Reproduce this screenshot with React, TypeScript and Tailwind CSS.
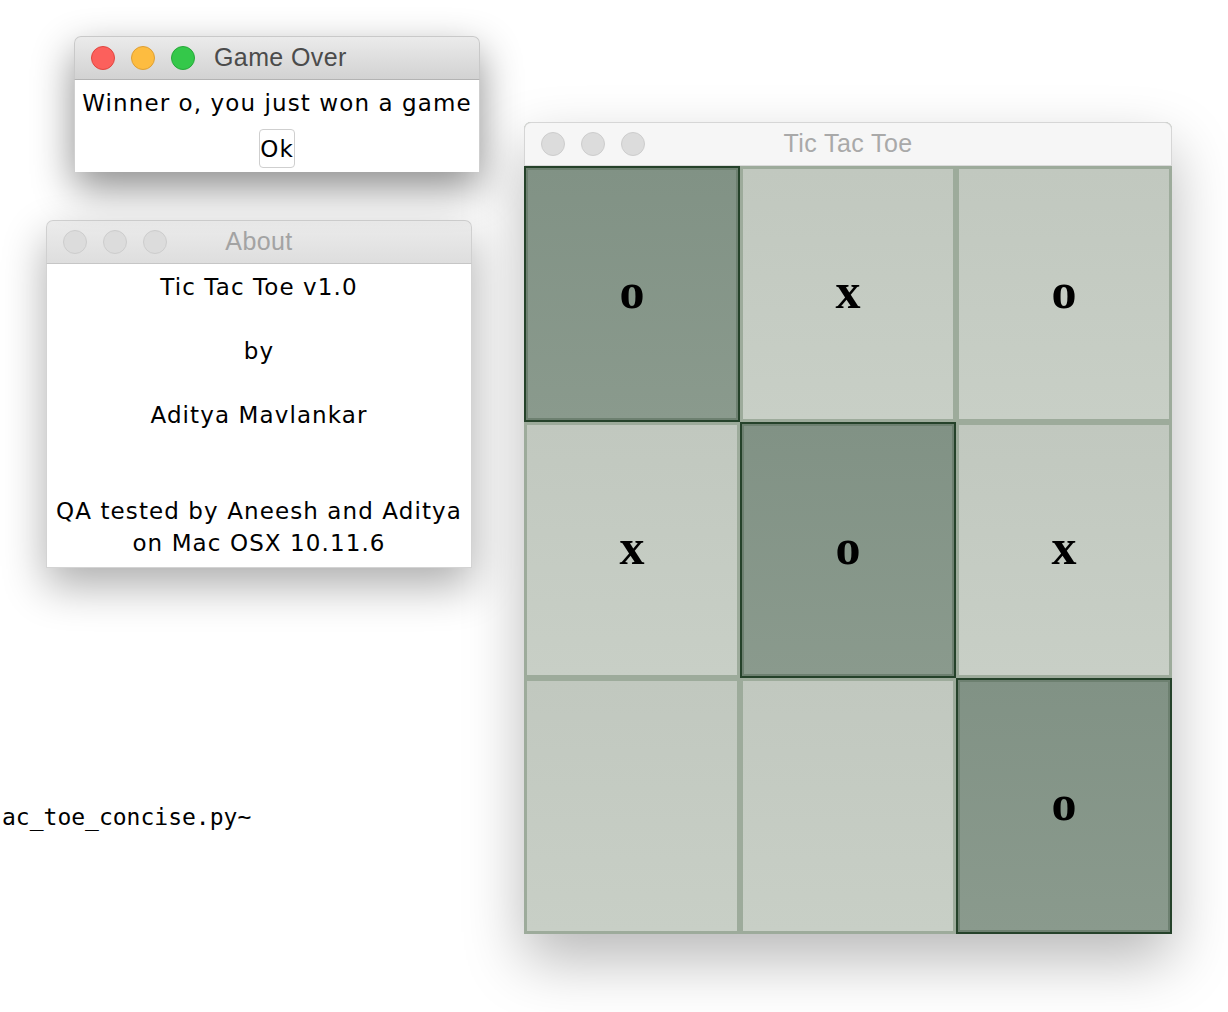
import { FC, ReactNode } from 'react'

// ---------------------------------------------------------------------------
// Types
// ---------------------------------------------------------------------------

type Mark = 'o' | 'x' | ''

interface Cell {
  mark: Mark
  win: boolean
}

const BOARD: Cell[] = [
  { mark: 'o', win: true },
  { mark: 'x', win: false },
  { mark: 'o', win: false },
  { mark: 'x', win: false },
  { mark: 'o', win: true },
  { mark: 'x', win: false },
  { mark: '', win: false },
  { mark: '', win: false },
  { mark: 'o', win: true },
]

const ABOUT_LINES = [
  'Tic Tac Toe v1.0',
  '',
  'by',
  '',
  'Aditya Mavlankar',
  '',
  '',
  'QA tested by Aneesh and Aditya',
  'on Mac OSX 10.11.6',
]

// ---------------------------------------------------------------------------
// Window chrome
// ---------------------------------------------------------------------------

const TrafficLights: FC<{ active: boolean }> = ({ active }) => {
  if (active) {
    return (
      <div className="flex items-center gap-[16px]">
        <div className="w-[24px] h-[24px] rounded-full bg-[#fc605c] border border-[#e0463f]" />
        <div className="w-[24px] h-[24px] rounded-full bg-[#fdbc40] border border-[#de9f34]" />
        <div className="w-[24px] h-[24px] rounded-full bg-[#34c84a] border border-[#27a83a]" />
      </div>
    )
  }
  return (
    <div className="flex items-center gap-[16px]">
      <div className="w-[24px] h-[24px] rounded-full bg-[#dcdcdc] border border-[#cdcdcd]" />
      <div className="w-[24px] h-[24px] rounded-full bg-[#dcdcdc] border border-[#cdcdcd]" />
      <div className="w-[24px] h-[24px] rounded-full bg-[#dcdcdc] border border-[#cdcdcd]" />
    </div>
  )
}

const TITLE_FONT = "font-['Liberation_Sans',Arial,sans-serif] text-[25px] tracking-[0.4px]"
const BODY_FONT = "font-['DejaVu_Sans',Verdana,sans-serif] text-[23px] tracking-[1.1px] text-black"

// ---------------------------------------------------------------------------
// Windows
// ---------------------------------------------------------------------------

const GameOverWindow = () => (
  <div className="absolute left-[74px] top-[36px] w-[406px] h-[136px] bg-white rounded-t-[7px] shadow-[0_16px_40px_rgba(0,0,0,0.45)] flex flex-col">
    <div className="h-[44px] flex items-center pl-[16px] rounded-t-[7px] bg-gradient-to-b from-[#ebebeb] to-[#d2d2d2] border border-[#c9c9c9] border-b-[#b3b3b3]">
      <TrafficLights active />
      <span className={`ml-[19px] text-[#4b4b4b] ${TITLE_FONT}`}>Game Over</span>
    </div>
    <div className="flex-1 flex flex-col items-center border-x border-[#cfcfcf]">
      <div className={`pt-[8px] leading-[30px] whitespace-nowrap ${BODY_FONT}`}>Winner o, you just won a game</div>
      <button className={`mt-[11px] w-[36px] h-[39px] rounded-[4px] bg-white border border-[#cfcfcf] leading-[36px] ${BODY_FONT} tracking-[0px]`}>
        Ok
      </button>
    </div>
  </div>
)

const AboutWindow = () => (
  <div className="absolute left-[46px] top-[220px] w-[426px] h-[348px] bg-white rounded-t-[7px] shadow-[0_18px_44px_rgba(0,0,0,0.32)] flex flex-col">
    <div className="relative h-[44px] flex items-center pl-[16px] rounded-t-[7px] bg-gradient-to-b from-[#ececec] to-[#dedede] border border-[#d0d0d0] border-b-[#c6c6c6]">
      <TrafficLights active={false} />
      <span className={`absolute left-0 right-0 text-center text-[#a3a3a3] ${TITLE_FONT}`}>About</span>
    </div>
    <div className="flex-1 pt-[7px] border-x border-b border-[#d3d3d3] flex flex-col items-center">
      {ABOUT_LINES.map((line, i) => (
        <div key={i} className={`h-[32px] leading-[32px] whitespace-nowrap ${BODY_FONT}`}>
          {line}
        </div>
      ))}
    </div>
  </div>
)

const BoardCell: FC<{ cell: Cell }> = ({ cell }) => {
  const base = cell.win
    ? 'border-2 border-[#25422a] shadow-[inset_0_0_0_2px_#6d8070] bg-gradient-to-b from-[#819285] to-[#8a9a8d]'
    : 'border-[3px] border-[#9dab9b] bg-gradient-to-b from-[#c1c8bf] to-[#c8cfc6]'
  return (
    <div className={`w-[216px] h-[256px] flex items-center justify-center ${base}`}>
      <span className="font-['Liberation_Serif','Times_New_Roman',serif] font-bold text-[50px] leading-none text-black -mt-[7px]">
        {cell.mark}
      </span>
    </div>
  )
}

const GameWindow = () => (
  <div className="absolute left-[524px] top-[122px] w-[648px] h-[812px] bg-[#9dab9b] rounded-t-[7px] shadow-[0_26px_60px_rgba(0,0,0,0.28)] flex flex-col">
    <div className="relative h-[44px] flex items-center pl-[16px] rounded-t-[7px] bg-[#f6f6f6] border border-[#d6d6d6] border-b-[#dadada]">
      <TrafficLights active={false} />
      <span className={`absolute left-0 right-0 text-center text-[#a9a9a9] ${TITLE_FONT}`}>Tic Tac Toe</span>
    </div>
    <div className="grid grid-cols-3">
      {BOARD.map((cell, i) => (
        <BoardCell key={i} cell={cell} />
      ))}
    </div>
  </div>
)

const Desktop: FC<{ children: ReactNode }> = ({ children }) => (
  <div className="relative w-[1228px] h-[1012px] bg-white overflow-hidden">{children}</div>
)

export default function App() {
  return (
    <Desktop>
      <div className="absolute left-[2px] top-[803px] font-['DejaVu_Sans_Mono',Menlo,monospace] text-[23px] leading-[28px] text-black whitespace-nowrap">
        ac_toe_concise.py~
      </div>
      <GameWindow />
      <AboutWindow />
      <GameOverWindow />
    </Desktop>
  )
}
